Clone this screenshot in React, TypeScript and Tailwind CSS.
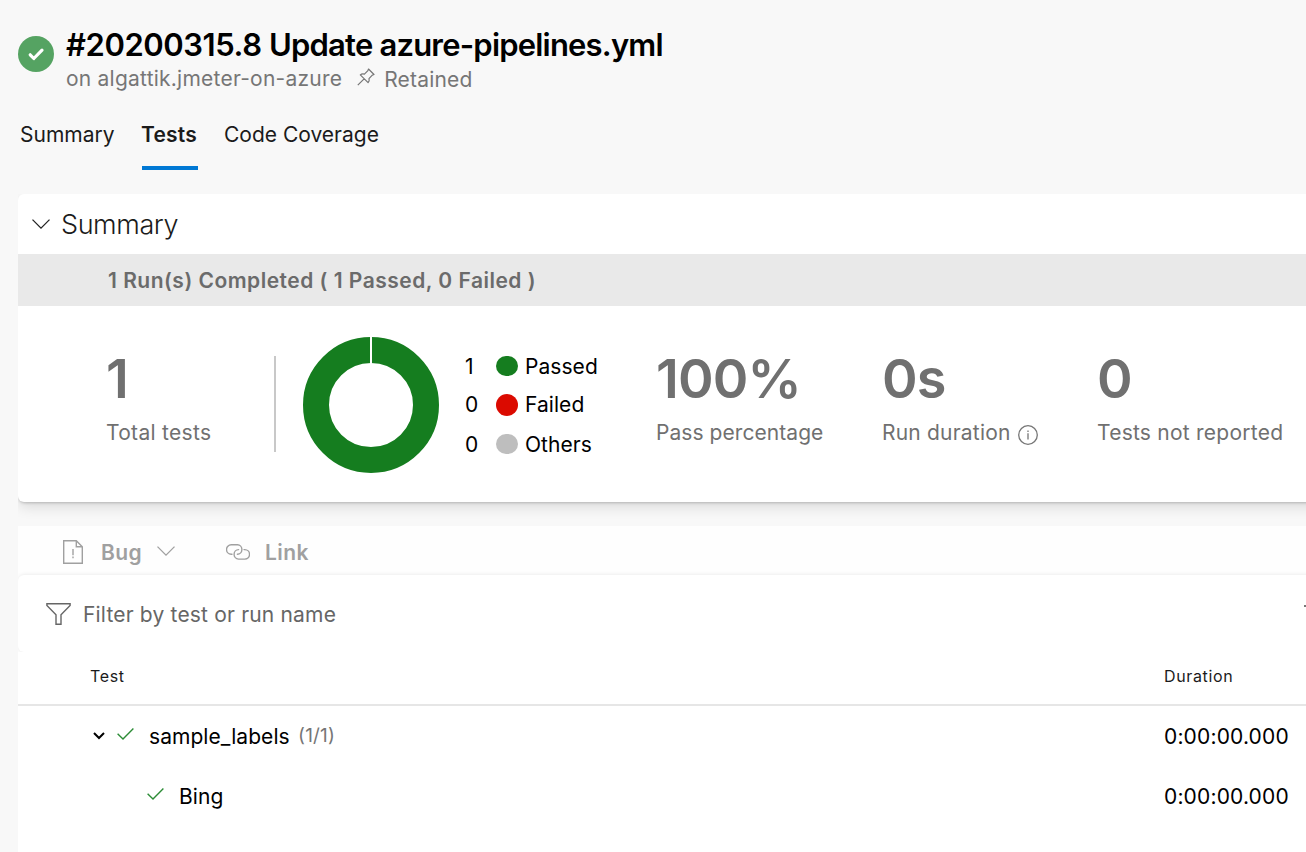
import type { ReactNode } from "react";

function StatusBadge() {
  return (
    <svg className="mt-9 h-9 w-9 shrink-0" viewBox="0 0 36 36" fill="none">
      <circle cx="18" cy="18" r="18" fill="#55a362" />
      <path d="M12.200 18.800l3.600 3.700 8.200-8.300" stroke="#fff" strokeWidth="3.200" strokeLinecap="round" strokeLinejoin="round" />
    </svg>
  );
}

function PinIcon() {
  return (
    <svg className="h-[18px] w-[18px]" viewBox="0 0 18 18" fill="none" stroke="#767676" strokeWidth="1.200" strokeLinejoin="round">
      <path d="M11.500 1l5.500 5.500-1.700.6-3.300 3.500c.5 1.700.1 3.100-.9 4.100L3.300 6.900c1.100-1 2.500-1.300 4.100-.8l3.500-3.500zM7.100 10.800L.8 17.200" />
    </svg>
  );
}

function Chevron({ className }: { className: string }) {
  return (
    <svg className={className} viewBox="0 0 18 10" fill="none" stroke="currentColor" strokeWidth="1.3">
      <path d="M.5.6L9 9.100l8.500-8.500" />
    </svg>
  );
}

function InfoIcon() {
  return (
    <svg className="h-5 w-5" viewBox="0 0 20 20" fill="none" stroke="#767676" strokeWidth="1.300">
      <circle cx="10" cy="10" r="9.300" />
      <path d="M10 8.300v6.200M10 5.400v1.500" />
    </svg>
  );
}

function BugIcon() {
  return (
    <svg className="h-6 w-5" viewBox="0 0 20 24" fill="none" stroke="#a0a0a0" strokeWidth="1.400">
      <path d="M.7.7h12.600l6 6v16.600H.7zM13.300.7v6h6M10 9v6.300M10 16.600v1.700" />
    </svg>
  );
}

function LinkIcon() {
  return (
    <svg className="h-4 w-6" viewBox="0 0 24 16" fill="none" stroke="#a0a0a0" strokeWidth="1.400" strokeLinecap="round">
      <path d="M6 10.200H5.200a4.700 4.700 0 0 1 0-9.400h6.300a4.700 4.700 0 0 1 4.400 4.700c0 2.600-2 4.700-4.500 4.700" />
      <path d="M18 5.600h.8a4.700 4.700 0 0 1 0 9.500h-6.300a4.700 4.700 0 0 1-4.400-4.800c0-2.600 2-4.700 4.500-4.700" />
    </svg>
  );
}

function FilterIcon() {
  return (
    <svg className="h-[22px] w-[25px]" viewBox="0 0 25 22" fill="none" stroke="#666" strokeWidth="1.400">
      <path d="M.9.7h23.200v1.700L15 11.700v9.600h-5v-9.600L.9 2.400z" />
    </svg>
  );
}

function PassIcon() {
  return (
    <svg className="mb-[5px] h-3 w-[17px] shrink-0" viewBox="0 0 17 12" fill="none" stroke="#2c8c36" strokeWidth="1.400">
      <path d="M.6 5.800l5.400 5.200L16.400.6" />
    </svg>
  );
}

function Donut() {
  return (
    <svg className="mt-[30px] ml-[26px] h-[138px] w-[138px] shrink-0" viewBox="0 0 138 138" fill="none">
      <circle cx="69" cy="69" r="55" stroke="#157d1f" strokeWidth="26" />
      <path d="M69 0v28" stroke="#fff" strokeWidth="2" />
    </svg>
  );
}

const legend = [
  { count: 1, label: "Passed", dot: "h-5 bg-[#157d1f]", row: "h-[38px]", text: "pt-0.5" },
  { count: 0, label: "Failed", dot: "h-[22px] bg-[#db0a00]", row: "h-[39px]", text: "" },
  { count: 0, label: "Others", dot: "h-5 bg-[#bebebe]", row: "h-[40px]", text: "pt-0.5" },
];

function Stat({ value, className, children }: { value: string; className: string; children: ReactNode }) {
  return (
    <div className={`shrink-0 pt-[42px] text-[#707070] ${className}`}>
      <div className="h-[62px] text-[54px] leading-[62px] font-semibold tracking-[-0.9px]">{value}</div>
      <div className="mt-2 flex h-[30px] items-center leading-[30px] whitespace-nowrap">{children}</div>
    </div>
  );
}

export default function App() {
  return (
    <div className="h-[852px] w-[1306px] overflow-hidden bg-[#f8f8f8] font-['Inter',sans-serif] text-[21px] tracking-[0.06px] text-[#1b1b1b]">
      <header className="flex h-[94px] gap-3 pl-[18px]">
        <StatusBadge />
        <div className="pt-[25px] whitespace-nowrap">
          <h1 className="h-10 text-[31px] leading-10 font-semibold tracking-[-0.8px] text-black">
            <span className="tracking-[-0.44px]">#20200315.8 </span>Update azure-pipelines.yml
          </h1>
          <div className="flex h-7 items-center leading-7 text-[#767676]">
            <span className="tracking-[0.23px]">on algattik.jmeter-on-azure</span>
            <span className="mb-1 ml-[15px]"><PinIcon /></span>
            <span className="ml-[9px] pt-px tracking-[0.2px]">Retained</span>
          </div>
        </div>
      </header>

      <nav className="flex h-[76px] pt-[5px] pl-[20px] leading-[72px] whitespace-nowrap">
        <span className="w-[122px] tracking-[0]">Summary</span>
        <span className="-ml-px h-[71px] w-[57px] bg-[linear-gradient(#0078d4,#0078d4)] bg-[length:56px_4px] bg-[position:1px_100%] bg-no-repeat font-semibold tracking-[0.2px]">
          Tests
        </span>
        <span className="ml-[26px] tracking-[0]">Code Coverage</span>
      </nav>

      <main className="-mr-5 pt-6 pl-[18px]">
        <section className="h-[308px] rounded-md bg-white shadow-[0_6px_14px_-1px_rgba(0,0,0,0.12),0_2px_3px_-1px_rgba(0,0,0,0.2)] [clip-path:inset(0_0_-24px_0)]">
          <div className="flex h-[60px] items-center pl-[14px]">
            <Chevron className="h-[10px] w-[18px] text-[#222]" />
            <h2 className="ml-[11px] pt-0.5 text-[27px] font-light tracking-[-0.42px]">Summary</h2>
          </div>
          <div className="h-[52px] bg-[#e9e9e9] pl-[90px] leading-[53px] font-semibold tracking-[0.49px] text-[#6b6b6b]">
            1 Run(s) Completed ( 1 Passed, 0 Failed )
          </div>
          <div className="flex h-[196px]">
            <Stat value="1" className="ml-[88px] w-[168px] tracking-[0.3px]">Total tests</Stat>
            <div className="mt-[50px] h-24 w-0.5 shrink-0 bg-[#c8c8c8]" />
            <Donut />
            <div className="ml-[25px] w-[191px] shrink-0 pt-[41px] text-black">
              {legend.map((item) => (
                <div key={item.label} className={`flex items-center ${item.row}`}>
                  <span className={`w-[31px] ${item.text}`}>{item.count}</span>
                  <span className={`w-[22px] rounded-full ${item.dot}`} />
                  <span className={`ml-[7px] ${item.text}`}>{item.label}</span>
                </div>
              ))}
            </div>
            <Stat value="100%" className="w-[226px]">Pass percentage</Stat>
            <Stat value="0s" className="w-[215px] tracking-[0.2px]">
              Run duration
              <span className="mt-1 ml-[7px]"><InfoIcon /></span>
            </Stat>
            <Stat value="0" className="w-[208px] tracking-[0.24px]">Tests not reported</Stat>
          </div>
        </section>

        <section className="mt-6 h-[326px] bg-white">
          <div className="flex h-[49px] items-center bg-[#fefefe] pt-[3px] pl-[45px] font-semibold tracking-[0.4px] text-[#a0a0a0]">
            <BugIcon />
            <span className="ml-[18px] pt-0.5">Bug</span>
            <Chevron className="mb-0.5 ml-[15px] h-[10px] w-[18px]" />
            <span className="ml-[51px]"><LinkIcon /></span>
            <span className="ml-[15px] pt-0.5">Link</span>
          </div>
          <div className="flex h-[77px] items-center rounded-md bg-white pl-[28px] text-[#666] shadow-[0_0_4px_rgba(0,0,0,0.1)] [clip-path:inset(-4px_0_0_0)]">
            <FilterIcon />
            <span className="ml-[12px] pt-[3px] tracking-[0.18px]">Filter by test or run name</span>
            <span className="mb-4 ml-auto h-0.5 w-[22px] bg-[#777]" />
          </div>
          <div className="flex h-[54px] items-center border-b-2 border-[#e6e6e6] bg-white pb-[4px] pl-[72px] text-[16px] tracking-[0.65px]">
            <span className="w-[1074px]">Test</span>
            <span>Duration</span>
          </div>
          <div className="flex h-[60px] items-center pl-[75px] text-black">
            <svg className="h-2 w-3" viewBox="0 0 12 8" fill="none" stroke="currentColor" strokeWidth="2">
              <path d="M1 1l5 5 5-5" />
            </svg>
            <span className="ml-3"><PassIcon /></span>
            <span className="ml-[15px] w-[149px] pt-0.5">sample_labels</span>
            <span className="pt-px text-[19px] tracking-[0.2px] text-[#767676]">(1/1)</span>
            <span className="mr-5 ml-auto w-[142px] pt-0.5 tracking-[0.16px]">0:00:00.000</span>
          </div>
          <div className="flex h-[60px] items-center pl-[129px] text-black">
            <PassIcon />
            <span className="ml-[15px] pt-0.5">Bing</span>
            <span className="mr-5 ml-auto w-[142px] pt-0.5 tracking-[0.16px]">0:00:00.000</span>
          </div>
        </section>
      </main>
    </div>
  );
}
